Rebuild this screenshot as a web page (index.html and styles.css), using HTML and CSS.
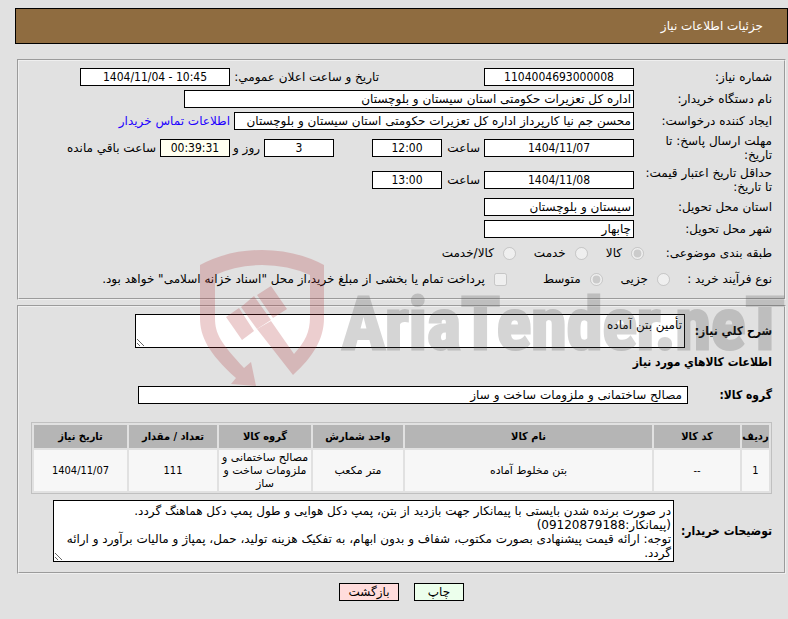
FILE: index.html
```html
<!DOCTYPE html>
<html lang="fa" dir="rtl">

<head>
    <meta charset="UTF-8">
    <meta name="viewport" content="width=device-width, initial-scale=1.0">
    <title>جزئیات اطلاعات نیاز</title>
    <link rel="stylesheet" href="styles.css">
</head>

<body>
    <header class="page-header">
        <h1>جزئیات اطلاعات نیاز</h1>
    </header>

    <form class="need-form">
        <fieldset class="panel">
            <div class="row">
                <label class="field-label" for="needNo">شماره نیاز:</label>
                <input class="box num medium" id="needNo" type="text" value="1104004693000008" readonly>
                <label class="announce-label" for="announceDate">تاریخ و ساعت اعلان عمومي:</label>
                <input class="box num medium" id="announceDate" type="text" value="1404/11/04 - 10:45" dir="ltr" readonly>
            </div>
            <div class="row">
                <label class="field-label" for="buyerOrg">نام دستگاه خریدار:</label>
                <input class="box wide" id="buyerOrg" type="text" value="اداره کل تعزیرات حکومتی استان سیستان و بلوچستان" readonly>
            </div>
            <div class="row">
                <label class="field-label" for="creator">ایجاد کننده درخواست:</label>
                <input class="box creator" id="creator" type="text" value="محسن جم نیا کارپرداز اداره کل تعزیرات حکومتی استان سیستان و بلوچستان" readonly>
                <a href="#">اطلاعات تماس خریدار</a>
            </div>
            <div class="row row-tall">
                <label class="field-label" for="replyDate">مهلت ارسال پاسخ: تا تاریخ:</label>
                <input class="box num medium" id="replyDate" type="text" value="1404/11/07" readonly>
                <label class="hour-label" for="replyHour">ساعت</label>
                <input class="box num small" id="replyHour" type="text" value="12:00" readonly>
                <input class="box num small days" id="daysLeft" type="text" value="3" readonly>
                <label class="day-label" for="daysLeft">روز و</label>
                <input class="box num small timer" id="timeLeft" type="text" value="00:39:31" readonly>
                <label for="timeLeft">ساعت باقي مانده</label>
            </div>
            <div class="row row-tall">
                <label class="field-label" for="validDate">حداقل تاریخ اعتبار قیمت: تا تاریخ:</label>
                <input class="box num medium" id="validDate" type="text" value="1404/11/08" readonly>
                <label class="hour-label" for="validHour">ساعت</label>
                <input class="box num small" id="validHour" type="text" value="13:00" readonly>
            </div>
            <div class="row">
                <label class="field-label" for="province">استان محل تحویل:</label>
                <input class="box medium" id="province" type="text" value="سیستان و بلوچستان" readonly>
            </div>
            <div class="row">
                <label class="field-label" for="city">شهر محل تحویل:</label>
                <input class="box medium" id="city" type="text" value="چابهار" readonly>
            </div>
            <div class="row row-choice">
                <span class="subject-label">طبقه بندی موضوعی:</span>
                <label class="choice"><input type="radio" name="subject" checked disabled><span>کالا</span></label>
                <label class="choice"><input type="radio" name="subject" disabled><span>خدمت</span></label>
                <label class="choice"><input type="radio" name="subject" disabled><span>کالا/خدمت</span></label>
            </div>
            <div class="row row-choice">
                <span class="process-label">نوع فرآیند خرید :</span>
                <label class="choice"><input type="radio" name="process" disabled><span>جزیی</span></label>
                <label class="choice"><input type="radio" name="process" checked disabled><span>متوسط</span></label>
                <label class="choice treasury"><input type="checkbox" disabled><span>پرداخت تمام یا بخشی از مبلغ خرید،از محل "اسناد خزانه اسلامی" خواهد بود.</span></label>
            </div>
        </fieldset>

        <fieldset class="panel details">
            <div class="row">
                <label class="summary-label bold" for="summary">شرح کلي نیاز:</label>
                <textarea class="box summary" id="summary" readonly>تأمین بتن آماده</textarea>
            </div>
            <h2>اطلاعات کالاهاي مورد نیاز</h2>
            <div class="row group-row">
                <label class="group-label bold" for="group">گروه کالا:</label>
                <input class="box group" id="group" type="text" value="مصالح ساختمانی و ملزومات ساخت و ساز" readonly>
            </div>
            <table class="goods">
                <colgroup>
                    <col class="col-index">
                    <col class="col-code">
                    <col>
                    <col class="col-unit">
                    <col class="col-group">
                    <col class="col-count">
                    <col class="col-date">
                </colgroup>
                <thead>
                    <tr>
                        <th>ردیف</th>
                        <th>کد کالا</th>
                        <th>نام کالا</th>
                        <th>واحد شمارش</th>
                        <th>گروه کالا</th>
                        <th>تعداد / مقدار</th>
                        <th>تاریخ نیاز</th>
                    </tr>
                </thead>
                <tbody>
                    <tr>
                        <td class="num">1</td>
                        <td class="num">--</td>
                        <td>بتن مخلوط آماده</td>
                        <td>متر مکعب</td>
                        <td>مصالح ساختمانی و ملزومات ساخت و ساز</td>
                        <td class="num">111</td>
                        <td class="num">1404/11/07</td>
                    </tr>
                </tbody>
            </table>
            <div class="row">
                <label class="notes-label bold" for="notes">توضیحات خریدار:</label>
                <textarea class="box notes" id="notes" readonly>در صورت برنده شدن بایستی با پیمانکار جهت بازدید از بتن، پمپ دکل هوایی و طول پمپ دکل هماهنگ گردد.
(پیمانکار:09120879188)
توجه: ارائه قیمت پیشنهادی بصورت مکتوب، شفاف و بدون ابهام، به تفکیک هزینه تولید، حمل، پمپاژ و مالیات برآورد و ارائه گردد.</textarea>
            </div>
        </fieldset>

        <div class="actions">
            <button class="btn-print" type="button">چاپ</button>
            <button class="btn-back" type="button">بازگشت</button>
        </div>

        <!-- translucent logo over the form -->
        <div class="watermark" dir="ltr" aria-hidden="true">
            <svg class="shield" viewBox="0 0 126 138">
                <path d="M0 15Q28 0 62 0Q96 0 124 15V68C124 89 113 107 93 125L57 79L71 71L94 104C105 92 110 82 110 67V25Q88 15 62 15Q36 15 15 25V68C15 84 21 93 44 118L51 112L56 136L31 134L36 128C8 103 0 86 0 68Z" />
                <path d="M26 67L39 58L54 81L42 90ZM41 57L54 46L71 70L57 79ZM57 45L71 36L87 59L73 68Z" />
            </svg>
            <span class="brand">AriaTender.neT</span>
        </div>
    </form>
</body>

</html>
```
FILE: styles.css
```css
body {
    margin: 0;
    padding: 8px 0;
    background: #e1e1e1;
    color: #000;
    font-family: 'DejaVu Sans', sans-serif;
    font-size: 12px;
    line-height: 14px;
}

.page-header {
    margin-left: 15px;
    padding: 10px 24px;
    border: 1px solid #000;
    background: #8f6c40;
    color: #fff;
}

h1 {
    margin: 0;
    font-size: 12px;
    font-weight: 400;
    line-height: 14px;
}

.need-form {
    position: relative;
    margin: 15px 2px 0 17px;
}

.panel {
    min-width: 0;
    margin: 0 0 5px;
    padding: 5px 12px 6px;
    border: 2px groove #efefef;
}

.row {
    display: flex;
    align-items: center;
    gap: 4px;
    min-height: 22px;
}

.row-tall {
    min-height: 32px;
}

.row-choice {
    min-height: 26px;
    gap: 18px;
}

.field-label {
    width: 134px;
    flex: none;
}

.box {
    box-sizing: border-box;
    height: 18px;
    margin: 0;
    padding: 0 2px;
    border: 1px solid #000;
    background: #fff;
    color: #000;
    font: inherit;
}

.num {
    font-family: 'DejaVu Sans Condensed', 'DejaVu Sans', sans-serif;
    text-align: center;
}

.medium {
    width: 150px;
}

.small {
    width: 70px;
}

.wide {
    width: 450px;
}

.creator {
    width: 400px;
}

.announce-label {
    width: 145px;
    margin-right: 101px;
    white-space: nowrap;
}

.hour-label {
    width: 34px;
}

.days {
    margin-right: 34px;
}

.day-label {
    width: 26px;
    white-space: nowrap;
}

.timer {
    background: #fffff0;
}

a {
    color: #20f;
    text-decoration: none;
}

.subject-label {
    width: 110px;
    white-space: nowrap;
}

.process-label {
    width: 84px;
    white-space: nowrap;
}

.choice {
    display: flex;
    align-items: center;
    gap: 9px;
    white-space: nowrap;
}

.choice input {
    width: 13px;
    height: 13px;
    margin: 0;
}

.treasury {
    margin-right: 18px;
}

.bold,
h2 {
    font-family: 'DejaVu Sans Condensed', 'DejaVu Sans', sans-serif;
    font-weight: 700;
}

.details {
    padding-top: 7px;
    padding-bottom: 10px;
}

textarea.box {
    display: block;
    padding: 3px 2px;
    overflow: hidden;
}

.summary-label {
    width: 83px;
}

.summary {
    width: 550px;
    height: 34px;
}

h2 {
    margin: 7px 0;
    font-size: 12px;
    line-height: 14px;
}

.group-row {
    margin: 15px 0 16px;
}

.group-label {
    width: 80px;
}

.group {
    width: 550px;
    padding: 0 5px;
}

.goods {
    width: 100%;
    margin-bottom: 6px;
    border: 1px solid #c0c0c0;
    border-spacing: 2px;
    table-layout: fixed;
    font-size: 11px;
    line-height: 13px;
    text-align: center;
}

.goods th {
    height: 23px;
    padding: 0;
    background: #b5b5b5;
    font-family: 'DejaVu Sans Condensed', 'DejaVu Sans', sans-serif;
    white-space: nowrap;
}

.goods td {
    height: 41px;
    padding: 0;
    background: #f7f7f7;
}

.col-index {
    width: 27px;
}

.col-code {
    width: 86px;
}

.col-unit {
    width: 90px;
}

.col-group {
    width: 92px;
}

.col-count {
    width: 88px;
}

.col-date {
    width: 93px;
}

.notes-label {
    width: 94px;
    white-space: nowrap;
}

.notes {
    flex: 1;
    height: 62px;
    margin-left: 22px;
}

.actions {
    display: flex;
    justify-content: center;
    gap: 15px;
    padding: 4px 0;
}

.actions button {
    height: 18px;
    padding: 0;
    border: 1px solid #000;
    color: #000;
    font: inherit;
}

.actions .btn-print {
    width: 50px;
    background: #ecffec;
}

.actions .btn-back {
    width: 60px;
    background: #ffdcdc;
}

.watermark {
    position: absolute;
    top: 191px;
    left: 183px;
    display: flex;
    gap: 16px;
    pointer-events: none;
}

.shield {
    flex: none;
    width: 126px;
    height: 138px;
    fill: #b12f34;
    opacity: 0.23;
}

.brand {
    margin-top: 30px;
    color: #4d4d4d;
    font-family: 'Liberation Sans Narrow', 'Roboto Condensed', 'DejaVu Sans Condensed', sans-serif;
    font-size: 72px;
    font-weight: 700;
    line-height: 90px;
    white-space: nowrap;
    -webkit-text-stroke: 3px #4d4d4d;
    opacity: 0.23;
}
```
